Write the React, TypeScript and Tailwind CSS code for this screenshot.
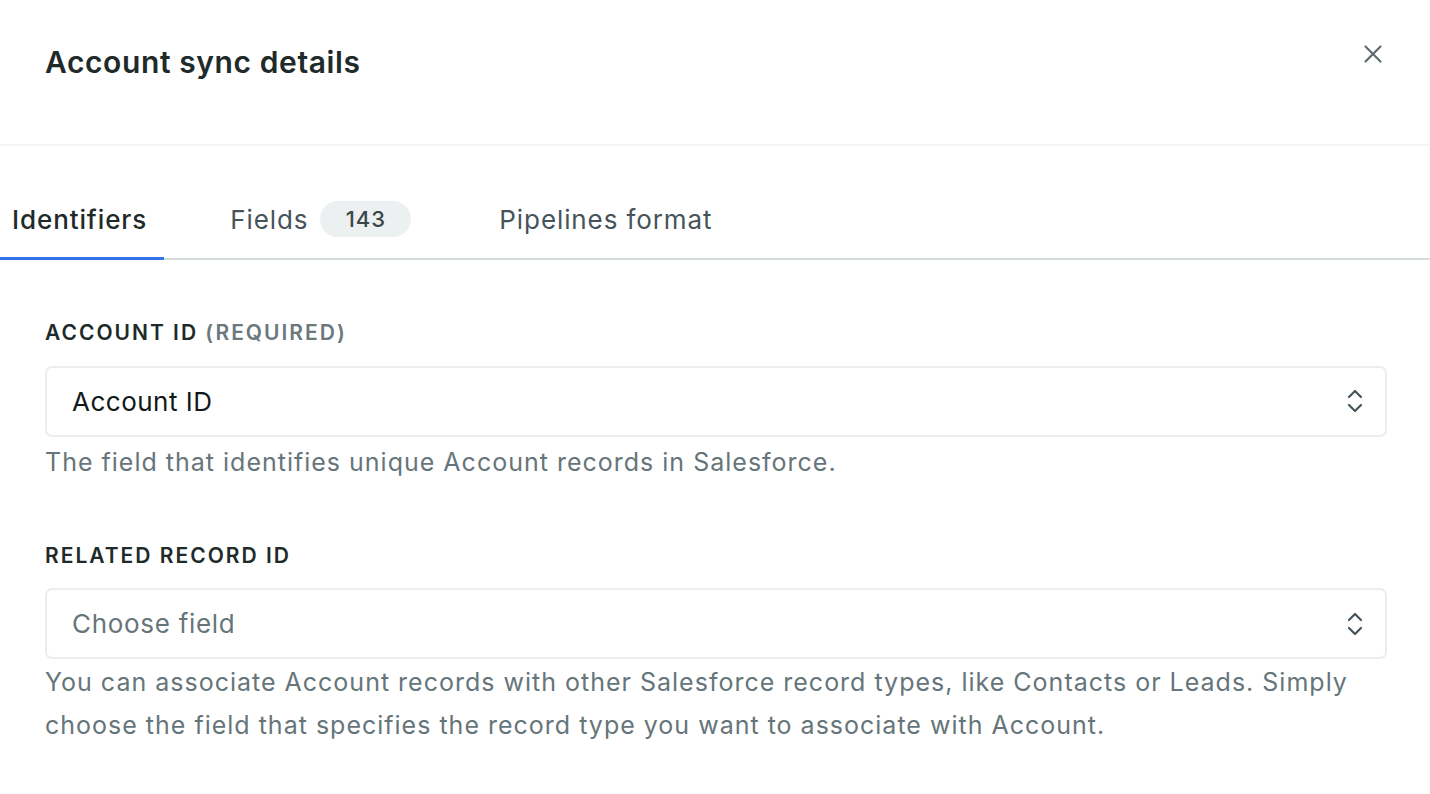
import { X } from 'lucide-react';

function SelectBox({ value, placeholder }: { value?: string; placeholder?: string }) {
  return (
    <div className="flex h-[71px] items-center justify-between rounded-[7px] border-2 border-[#ebeeee] bg-white pl-[25px] pr-[20px]">
      <span className={value ? 'text-[26px] tracking-[0.5px] text-[#111818]' : 'text-[26px] tracking-[0.7px] text-[#67757a]'}>
        {value ?? placeholder}
      </span>
      <svg width="20" height="28" viewBox="0 0 20 28" fill="none" stroke="#46545a" strokeWidth="2.2" strokeLinecap="round" strokeLinejoin="round">
        <path d="M4 10 L10 4 L16 10" />
        <path d="M4 18 L10 24 L16 18" />
      </svg>
    </div>
  );
}

export default function App() {
  return (
    <div className="h-[794px] w-[1430px] overflow-hidden bg-white font-['Inter',sans-serif]">
      <div className="flex h-[146px] items-start justify-between border-b-2 border-[#f4f5f5] pl-[45px] pr-[42px]">
        <h1 className="mt-[40px] text-[30px] font-semibold tracking-[0.6px] text-[#1f2a2a]">Account sync details</h1>
        <button className="mt-[39px] text-[#5d6a6e]">
          <X size={30} strokeWidth={1.7} />
        </button>
      </div>

      <div className="mt-[54px] flex border-b-2 border-[#d3dada] tracking-[0.9px]">
        <div className="-mb-[2px] border-b-[3px] border-[#3772e6] pl-[12px] pr-[17px] pb-[18px] text-[26px] font-medium text-[#1f2a2a]">
          Identifiers
        </div>
        <div className="ml-[66px] flex items-start gap-[12px] text-[26px] text-[#46545a]">
          <span>Fields</span>
          <span className="mt-[1px] flex h-[36px] w-[91px] items-center justify-center rounded-full bg-[#edf0f0] text-[22px] font-medium text-[#3a4648]">143</span>
        </div>
        <div className="ml-[88px] text-[26px] text-[#46545a]">Pipelines format</div>
      </div>

      <div className="pl-[45px] pr-[43px] pt-[57px]">
        <div className="mb-[17px] text-[21px] font-semibold tracking-[2px] text-[#1f2a2a]">
          ACCOUNT ID <span className="text-[#6b787c]">(REQUIRED)</span>
        </div>
        <SelectBox value="Account ID" />
        <p className="mt-[4px] text-[25px] leading-[43px] tracking-[1px] text-[#66757a]">
          The field that identifies unique Account records in Salesforce.
        </p>

        <div className="mt-[56px] mb-[17px] text-[21px] font-semibold tracking-[2px] text-[#1f2a2a]">RELATED RECORD ID</div>
        <SelectBox placeholder="Choose field" />
        <p className="mt-[2px] text-[25px] leading-[43px] tracking-[1px] text-[#66757a]">
          You can associate Account records with other Salesforce record types, like Contacts or Leads. Simply choose the field that specifies the record type you want to associate with Account.
        </p>
      </div>
    </div>
  );
}
